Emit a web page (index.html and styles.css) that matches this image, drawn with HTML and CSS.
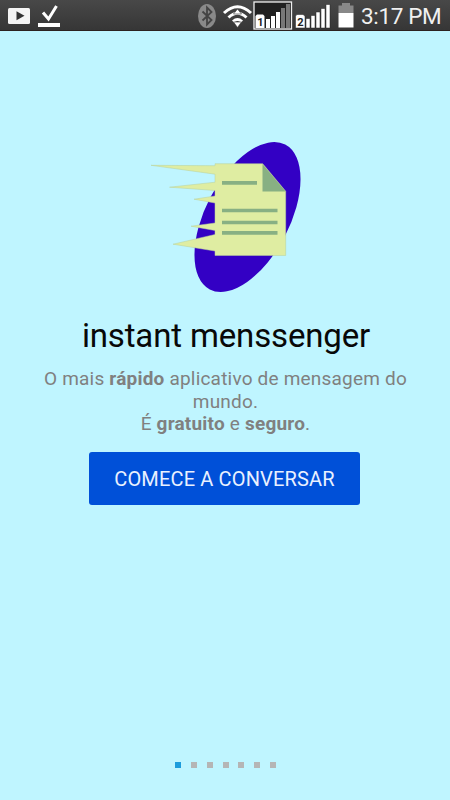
FILE: index.html
```html
<!DOCTYPE html>
<html lang="pt">
<head>
<meta charset="utf-8">
<title>instant menssenger</title>
<link rel="stylesheet" href="styles.css">
</head>
<body>
<header class="status">
  <svg class="status-icons" width="361" height="31" viewBox="0 0 361 31" aria-hidden="true">
    <rect x="8" y="8" width="22" height="16" rx="1.5" fill="#f4f4f4"/>
    <path d="M16.500 11.300v9l8-4.500z" fill="#333"/>
    <path d="M43 12.500l5.500 6.500 8-13" fill="none" stroke="#fff" stroke-width="3"/>
    <path d="M38 23h22v4H38z" fill="#fff"/>
    <ellipse cx="207" cy="16" rx="9" ry="12" fill="#898989"/>
    <path d="M202.500 11.500l9 8.500-4.500 4.500V7.500l4.500 4.500-9 8.500" fill="none" stroke="#444" stroke-width="1.800"/>
    <g fill="none" stroke="#fff" stroke-width="3">
      <path d="M224 13q13.500-12.500 27 0"/>
      <path d="M228.500 17.500q9-8.500 18 0"/>
      <path d="M233 21.500q4.500-4 9 0"/>
    </g>
    <path d="M237.500 9l4 5h-8zM233.500 22h8l-4 5.500z" fill="#fff" stroke="#333" stroke-width=".6"/>
    <rect x="254" y="2" width="37.500" height="27" fill="#202020" stroke="#eee" stroke-width="1.300"/>
    <path d="M255.500 16l1.500-1.500h6l1.500 1.500v12h-9zM266 19h4v9h-4zM271 16h4v12h-4zM276 12h4v16h-4z" fill="#fff"/>
    <path d="M281 8h4v20h-4zM286 4h4v24h-4z" fill="#777"/>
    <text class="sim" x="257.300" y="26">1</text>
    <path d="M295.500 16l1.500-1.500h6l2 1.500v12h-9.500zM306 18.500h4V28h-4zM311 15.500h4V28h-4zM316 12h4v16h-4zM321 8.500h4V28h-4zM326 4.500h4V28h-4z" fill="#fff" stroke="#262626" stroke-width=".5"/>
    <text class="sim" x="297.300" y="26">2</text>
    <path d="M342 3h8v2.500h3.500V13h-15V5.500h3.500z" fill="#888"/>
    <path d="M338.500 13h15v14.500h-15z" fill="#fff"/>
  </svg>
  <span class="clock">3:17 PM</span>
</header>
<main class="intro">
  <svg class="logo" width="150" height="152" viewBox="151 141 150 152" aria-hidden="true">
    <ellipse cx="247.500" cy="217" rx="42" ry="81.700" transform="rotate(27.500 247.500 217)" fill="#3300c4"/>
    <path d="M215 163.700h47.700l23 27.500V255.500H215v-4.500l-42-6.800 42-9.700v-4l-24-4.300 24-3.200v-20l-21-3.800 21-3.200v-5.500l-45.500-3.300 45.500-5v-8l-64-8.900 64 .4z" fill="#dfeda2" stroke="#b9d09a" stroke-width=".5"/>
    <path d="M262.500 164v27.500h23.200z" fill="#88b083"/>
    <path d="M222 181h35v3.800h-35zM222 208.800h55.500v3.400H222zM222 220.700h55.500v3.600H222zM222 231h55.500v3.800H222z" fill="#88b083"/>
  </svg>
  <h1 class="title">instant menssenger</h1>
  <p class="tagline">O mais <b>rápido</b> aplicativo de mensagem do mundo.<br>É <b>gratuito</b> e <b>seguro</b>.</p>
  <button class="start" type="button">COMECE A CONVERSAR</button>
  <nav class="dots"><i class="dot active"></i><i class="dot"></i><i class="dot"></i><i class="dot"></i><i class="dot"></i><i class="dot"></i><i class="dot"></i></nav>
</main>
</body>
</html>
```
FILE: styles.css
```css
* { box-sizing: border-box; }
body {
  margin: 0;
  height: 800px;
  display: flex;
  flex-direction: column;
  overflow: hidden;
  background: #bff5ff;
  font-family: Roboto, sans-serif;
}
.status {
  height: 31px;
  flex: none;
  display: flex;
  background: linear-gradient(#484848, #363636);
  border-bottom: 1px solid #2b2220;
}
.status-icons { flex: none; display: block; }
.sim { font: bold 11px Roboto, sans-serif; fill: #222; }
.clock {
  color: #f0f0f0;
  font-size: 22.500px;
  letter-spacing: -0.350px;
  line-height: 33px;
  white-space: nowrap;
}
.intro {
  flex: 1;
  display: flex;
  flex-direction: column;
  align-items: center;
  padding: 110px 30px 32px;
}
.logo { display: block; margin-left: 2px; }
.title {
  margin: 22px 0 0;
  padding-left: 2px;
  font-size: 33px;
  letter-spacing: -0.150px;
  font-weight: 400;
  line-height: 42px;
  white-space: nowrap;
  color: #080808;
}
.tagline {
  margin: 11px 0 0;
  width: 390px;
  padding-left: 1px;
  text-align: center;
  font-size: 19px;
  letter-spacing: 0.200px;
  line-height: 22.500px;
  color: #808080;
}
.start {
  margin: 16px 1px 0 0;
  width: 271px;
  height: 53px;
  padding: 2px 0 0;
  border: 0;
  border-radius: 3px;
  background: #0050d8;
  color: #e9f0ff;
  font: 400 20px Roboto, sans-serif;
  letter-spacing: 0.150px;
  white-space: nowrap;
}
.dots { display: flex; gap: 9.850px; margin: auto 0 0 1px; }
.dot { width: 6px; height: 6px; background: #b5b5b5; }
.active { background: #1c9cdc; }
```
